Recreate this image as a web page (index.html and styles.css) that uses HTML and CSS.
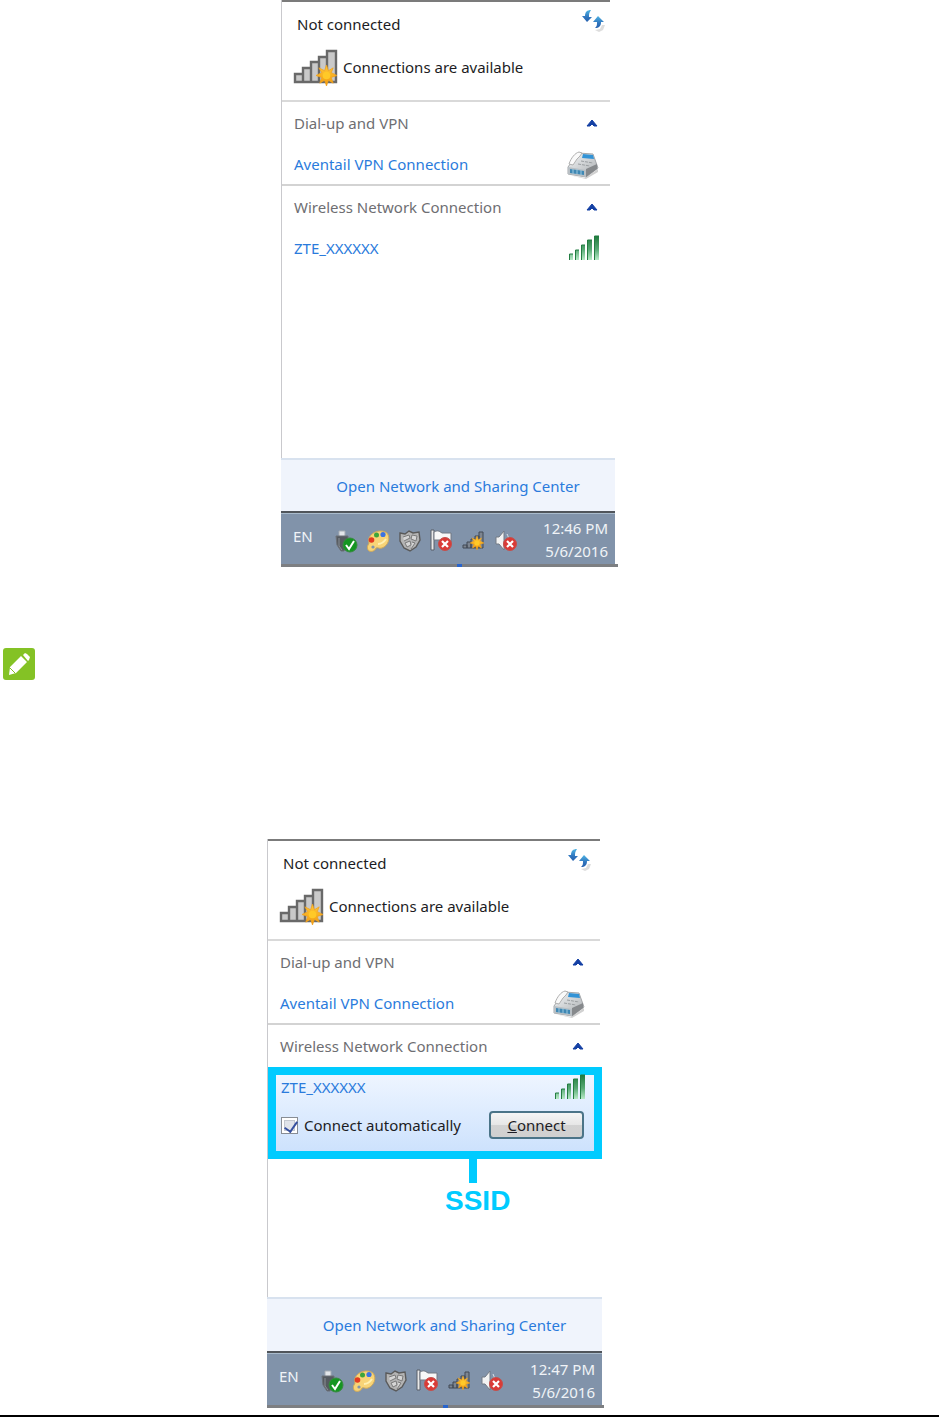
FILE: index.html
```html
<!DOCTYPE html>
<html lang="en">
<head>
<meta charset="utf-8">
<title>Wireless connection</title>
<link rel="stylesheet" href="styles.css">
</head>
<body>
<svg class="sprite" aria-hidden="true">
  <defs>
    <linearGradient id="g-green" x1="0" y1="0" x2="0" y2="1"><stop offset="0" stop-color="#1f7a3c"/><stop offset=".55" stop-color="#57a974"/><stop offset="1" stop-color="#b9ebc8"/></linearGradient>
    <linearGradient id="g-blue" x1="0" y1="0" x2="0" y2="1"><stop offset="0" stop-color="#4fb4e4"/><stop offset=".6" stop-color="#2f74bd"/><stop offset="1" stop-color="#2560ae"/></linearGradient>
    <linearGradient id="g-star" x1="0" y1="0" x2="0" y2="1"><stop offset="0" stop-color="#ffc93a"/><stop offset="1" stop-color="#f29a0c"/></linearGradient>
    <linearGradient id="g-phone" x1="0" y1="0" x2="1" y2="1"><stop offset="0" stop-color="#f4f6f7"/><stop offset="1" stop-color="#a9adb0"/></linearGradient>
  </defs>
  <symbol id="refresh" viewBox="0 0 24 24">
    <path d="M14 22l5-1 2-4h3l-2 5-4 2z" fill="#bbb" opacity=".5"/>
    <path d="M10 2C6 2 4 4 4 8H1l5 6 5-5H8c0-3 0-4 2-7z" fill="url(#g-blue)"/>
    <path d="M14 20c4 0 6-2 6-6h3l-6-6-5 6h4c0 3 0 4-2 6z" fill="url(#g-blue)"/>
  </symbol>
  <symbol id="star" viewBox="0 0 22 22">
    <path d="M11 0l2 6 5-3-2 5 6 3-6 2 2 6-5-3-2 6-2-6-5 3 2-6-6-2 6-3-3-5 6 3z" fill="url(#g-star)" stroke="#f0a01c" stroke-width=".8"/>
    <circle cx="11" cy="11" r="4" fill="#ffc928"/>
  </symbol>
  <symbol id="bars-star" viewBox="0 0 46 40">
    <path d="M2 27h8v8H2zM10 21h8v14h-8zM18 15h8v20h-8zM26 10h8v25h-8zM34 4h9v31h-9z" fill="#c9c9c9" stroke="#696969" stroke-width="2.4"/>
    <use href="#star" x="23" y="18" width="21" height="21"/>
  </symbol>
  <symbol id="caret" viewBox="0 0 14 10">
    <path d="M2 8l5-6 5 6H9L7 6 5 8z" fill="#1440a4" stroke="#1440a4"/>
  </symbol>
  <symbol id="phone" viewBox="0 0 32 30">
    <path d="M2 26l16 3 13-9v3l-12 7z" fill="#999" opacity=".45"/>
    <path d="M1 18L11 4l15 1 5 14-12 9L1 25z" fill="url(#g-phone)" stroke="#a4a7aa"/>
    <path d="M19 20l11-5v5l-11 8z" fill="#86898c"/>
    <path d="M1 18l18 3v7L1 25z" fill="#b8bfc4"/>
    <path d="M3 20l14 2v4L3 24z" fill="#3f88b4"/>
    <path d="M6 20v5M10 20v5M14 21v5" stroke="#9dc8df"/>
    <path d="M2 15C4 9 8 4 12 3l3 1-2 3-3 3-4 6z" fill="#fafafa" stroke="#b0b0b0"/>
    <path d="M16 5l10 1 1 4-12-1z" fill="#3293d6"/>
    <path d="M14 12l12 2M11 15l12 2" stroke="#9a9ea1" stroke-dasharray="3 1"/>
  </symbol>
  <symbol id="signal" viewBox="0 0 30 26">
    <path d="M0 19h4v6H0zM6 15h4v10H6zM12 10h4v15h-4zM18 5h5v20h-5zM25 1h5v24h-5z" fill="url(#g-green)"/>
    <path d="M.5 25v-6H4M6.500 25V15H10M12.500 25V10H16M18.500 25V5H23M25.500 25V1H30" fill="none" stroke="#237d42"/>
  </symbol>
  <symbol id="error" viewBox="0 0 14 14">
    <circle cx="7" cy="7" r="6.500" fill="#da3a36" stroke="#c4504c"/>
    <path d="M4 4l6 6M10 4l-6 6" stroke="#fff" stroke-width="2.2"/>
  </symbol>
  <symbol id="usb" viewBox="0 0 24 24">
    <path d="M5 2h6v6H5z" fill="#e3e6ea" stroke="#a5abb3"/>
    <path d="M2 7h12v9l-4 6H7l-4-6z" fill="#555a60" stroke="#6c7178"/>
    <path d="M5 9v8l3 4" stroke="#8b9096" fill="none"/>
    <circle cx="16" cy="16" r="7" fill="#159522" stroke="#378a3f"/>
    <path d="M12 16l3 4 5-8" fill="none" stroke="#fff" stroke-width="2"/>
  </symbol>
  <symbol id="palette" viewBox="0 0 24 24">
    <path d="M3 9c3-7 13-9 18-5 4 5 1 13-5 15-3 1-4-1-6 0-1 3-4 4-7 3-2-2-2-4-1-6 2-2 0-4 1-7z" fill="#f8d477" stroke="#cfa95b"/>
    <circle cx="7" cy="18" r="1.6" fill="#8193aa"/>
    <circle cx="5.500" cy="11" r="2.800" fill="#e33b20"/>
    <circle cx="10.500" cy="6" r="2.500" fill="#3da53b"/>
    <circle cx="17" cy="5.500" r="2.600" fill="#3d73e0"/>
    <path d="M12 15c4 0 6-2 8-5" stroke="#fff0b2" stroke-width="2" fill="none"/>
  </symbol>
  <symbol id="shield" viewBox="0 0 24 24">
    <path d="M2 4l5 1 4-3 4 2 6-1 1 8-4 7-6 4-6-3-4-7z" fill="#b4b4b4" stroke="#5a5a5a" stroke-width="1.4"/>
    <path d="M5 8l6-2 1 3-6 3M14 6l5 1-1 5-5-2zM7 14l5-2 1 4-4 2zM14 13l3 1-4 6" fill="#d6d6d6" stroke="#7a7a7a"/>
  </symbol>
  <symbol id="flag-error" viewBox="0 0 24 24">
    <path d="M1 1h3v20H1z" fill="#e9e9e9" stroke="#595f68"/>
    <path d="M4 3c4-2 5-1 8 1h9v9c-5 1-6-1-9-2H4z" fill="#f8f8f8" stroke="#737982"/>
    <use href="#error" x="8" y="8" width="14" height="14"/>
  </symbol>
  <symbol id="bars-small" viewBox="0 0 24 24">
    <path d="M1 16h4v3H1zM5 13h4v6H5zM9 10h4v9H9zM13 7h4v12h-4zM17 3h4v16h-4z" fill="#7d8590" stroke="#414954"/>
    <use href="#star" x="8" y="7" width="14" height="14"/>
  </symbol>
  <symbol id="speaker-error" viewBox="0 0 24 24">
    <path d="M2 8h3l5-6v19l-5-6H2z" fill="#f2f2f2" stroke="#737b85"/>
    <path d="M13 5c2 4 2 6 0 10" stroke="#dfe4eb" fill="none"/>
    <use href="#error" x="9" y="8" width="14" height="14"/>
  </symbol>
</svg>

<main>
  <section class="figure figure-first">
    <div class="panel">
      <div class="networks">
        <header class="status">
          <div class="row row-title"><span>Not connected</span><button class="icon-button" aria-label="Refresh"><svg class="i-refresh"><use href="#refresh"/></svg></button></div>
          <div class="row row-available"><svg class="i-available"><use href="#bars-star"/></svg><span>Connections are available</span></div>
        </header>
        <div class="group group-line">
          <div class="row row-group"><span>Dial-up and VPN</span><button class="icon-button" aria-label="Collapse dial-up and VPN"><svg class="i-caret"><use href="#caret"/></svg></button></div>
          <div class="row"><a href="#">Aventail VPN Connection</a><svg class="i-phone"><use href="#phone"/></svg></div>
        </div>
        <div class="group">
          <div class="row row-group"><span>Wireless Network Connection</span><button class="icon-button" aria-label="Collapse wireless"><svg class="i-caret"><use href="#caret"/></svg></button></div>
          <div class="row"><a href="#">ZTE_XXXXXX</a><svg class="i-signal"><use href="#signal"/></svg></div>
        </div>
      </div>
      <footer class="center-link"><a href="#">Open Network and Sharing Center</a></footer>
      <div class="taskbar">
        <span class="lang">EN</span>
        <div class="tray"><svg><use href="#usb"/></svg><svg><use href="#palette"/></svg><svg><use href="#shield"/></svg><svg><use href="#flag-error"/></svg><svg><use href="#bars-small"/></svg><svg><use href="#speaker-error"/></svg></div>
        <div class="clock"><span>12:46 PM</span><span>5/6/2016</span></div>
      </div>
      <div class="base"><span class="base-mark"></span></div>
    </div>
  </section>

  <div class="note">
    <svg class="i-note" viewBox="0 0 32 32" role="img" aria-label="Note">
      <rect width="32" height="32" rx="3" fill="#84c225"/>
      <path d="M7 19L18 8l6 6-11 11-7 2zM20 7l2-2 2 1 3 3-1 3-1 1z" fill="#fff"/>
      <path d="M7 20l5 5" stroke="#84c225"/>
    </svg>
  </div>

  <section class="figure figure-second">
    <div class="panel panel-second">
      <div class="networks">
        <header class="status">
          <div class="row row-title"><span>Not connected</span><button class="icon-button" aria-label="Refresh"><svg class="i-refresh"><use href="#refresh"/></svg></button></div>
          <div class="row row-available"><svg class="i-available"><use href="#bars-star"/></svg><span>Connections are available</span></div>
        </header>
        <div class="group group-line">
          <div class="row row-group"><span>Dial-up and VPN</span><button class="icon-button" aria-label="Collapse dial-up and VPN"><svg class="i-caret"><use href="#caret"/></svg></button></div>
          <div class="row"><a href="#">Aventail VPN Connection</a><svg class="i-phone"><use href="#phone"/></svg></div>
        </div>
        <div class="group">
          <div class="row row-group"><span>Wireless Network Connection</span><button class="icon-button" aria-label="Collapse wireless"><svg class="i-caret"><use href="#caret"/></svg></button></div>
        </div>
        <div class="selected">
          <div class="selected-row"><a href="#">ZTE_XXXXXX</a><svg class="i-signal"><use href="#signal"/></svg></div>
          <div class="selected-row selected-actions">
            <label class="auto"><input type="checkbox" class="check" checked>Connect automatically</label>
            <button class="connect"><u>C</u>onnect</button>
          </div>
        </div>
        <div class="callout"><span class="stem"></span><span class="callout-text">SSID</span></div>
      </div>
      <footer class="center-link"><a href="#">Open Network and Sharing Center</a></footer>
      <div class="taskbar">
        <span class="lang">EN</span>
        <div class="tray"><svg><use href="#usb"/></svg><svg><use href="#palette"/></svg><svg><use href="#shield"/></svg><svg><use href="#flag-error"/></svg><svg><use href="#bars-small"/></svg><svg><use href="#speaker-error"/></svg></div>
        <div class="clock"><span>12:47 PM</span><span>5/6/2016</span></div>
      </div>
      <div class="base"><span class="base-mark"></span></div>
    </div>
  </section>
  <hr class="page-rule">
</main>
</body>
</html>
```
FILE: styles.css
```css
* { box-sizing: border-box; }
body { margin: 0; background: #fff; color: #1c1c24; font: 15px/22px "Noto Sans", "Open Sans", sans-serif; }
a { color: #2a7bdc; text-decoration: none; }
svg { display: block; flex: none; }
.sprite { position: absolute; width: 0; height: 0; }

.figure { display: grid; }
.figure-first { grid-template-columns: 281fr minmax(337px, 337fr) 321fr; }
.figure-second { grid-template-columns: 267fr minmax(337px, 337fr) 335fr; }
.panel { grid-column: 2; }
.networks { min-height: 458px; border-left: 1px solid #c9c9cd; }

.status { margin-right: 8px; padding-bottom: 11px; border-top: 2px solid #7b7b7b; border-bottom: 2px solid #d9d9d9; }
.panel-second .status, .panel-second .group { margin-right: 4px; }
.group { margin-right: 8px; }
.group-line { border-bottom: 2px solid #d3d3d3; }
.row { display: flex; align-items: center; justify-content: space-between; height: 40px; padding: 0 11px 0 12px; white-space: nowrap; }
.row-title { height: 43px; padding: 0 5px 0 15px; }
.row-available { height: 44px; padding-left: 11px; justify-content: flex-start; gap: 4px; }
.row-group { height: 42px; color: #6e6e72; }
.panel-second .row { padding-right: 15px; }
.panel-second .row-title { padding-right: 9px; }
.icon-button { border: 0; padding: 0; background: none; }

.i-refresh { width: 24px; height: 24px; margin-bottom: 8px; }
.i-available { width: 46px; height: 40px; }
.i-caret { width: 14px; height: 10px; }
.i-phone { width: 32px; height: 30px; }
.i-signal { width: 30px; height: 26px; }
.i-note { width: 32px; height: 32px; }

.center-link { display: flex; align-items: center; justify-content: center; height: 53px; margin-right: 3px; padding-left: 20px; background: #f0f4fc; border-top: 2px solid #d8e2ef; white-space: nowrap; }
.taskbar { display: flex; align-items: center; height: 53px; margin-right: 3px; padding: 0 7px 0 12px; border-top: 2px solid #50555b; background: #8193aa; box-shadow: inset 0 1px #a9bbcc; color: #f0f3f7; white-space: nowrap; }
.lang { width: 41px; padding-bottom: 6px; }
.tray { display: flex; gap: 8px; padding-top: 4px; }
.tray svg { width: 24px; height: 24px; }
.clock { display: flex; flex: 1; flex-direction: column; align-items: flex-end; padding-top: 3px; line-height: 23px; }
.base { display: flex; justify-content: center; height: 3px; background: #7d7f82; }
.base-mark { width: 5px; margin-left: 20px; background: #2864cc; }
.panel-second .center-link, .panel-second .taskbar { height: 54px; margin-right: 2px; }

.note { padding: 81px 3px 159px; }

.selected { margin-right: 2px; border: 8px solid #00cbff; background: linear-gradient(#eef5ff, #cde2fd); padding: 0 9px 0 5px; height: 92px; }
.selected-row { display: flex; align-items: center; justify-content: space-between; height: 24px; white-space: nowrap; }
.selected-actions { height: 52px; margin-right: 1px; }
.auto { display: flex; align-items: center; gap: 6px; }
.check { appearance: none; width: 17px; height: 17px; margin: 0; border: 1px solid #888d94; background: #dfe3ea; box-shadow: inset 0 0 0 2px #fff, inset 0 0 0 3px #c3c8d0; }
.check:checked::after { content: ""; display: block; width: 6px; height: 11px; margin: 1px 0 0 5px; border: solid #344fa0; border-width: 0 2px 2px 0; transform: rotate(35deg); }
.connect { width: 95px; height: 28px; padding: 0; border: 2px solid #4b7488; border-radius: 4px; background: linear-gradient(#f5f5f5, #e6e6e6 50%, #d2d2d2 50%, #d0d0d0); color: #1c1c24; font: inherit; line-height: 22px; }
.callout { display: flex; flex-direction: column; align-items: flex-start; width: min-content; margin-left: 177px; color: #00cbff; font: bold 28px/36px "Liberation Sans", sans-serif; }
.stem { width: 8px; height: 24px; margin-left: 24px; background: #00cbff; }

.page-rule { height: 2px; margin: 7px 0 0; border: 0; background: #000; }
```
